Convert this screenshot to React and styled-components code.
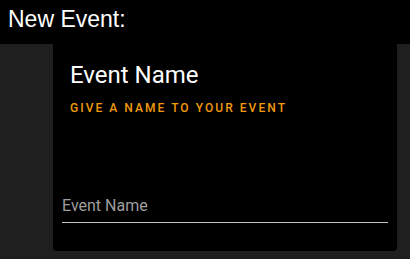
import React from 'react';
import styled, { createGlobalStyle } from 'styled-components';

const GlobalStyle = createGlobalStyle`
  html, body {
    margin: 0;
    padding: 0;
    background: #1f1f1f;
  }
  body {
    font-family: Roboto, "Liberation Sans", sans-serif;
  }
`;

const Page = styled.div`
  width: 410px;
  height: 259px;
  display: flex;
  flex-direction: column;
  background: #1f1f1f;
  overflow: hidden;
`;

const Header = styled.header`
  height: 44px;
  background: #000;
  display: flex;
  align-items: flex-start;
  padding-left: 8px;
  box-sizing: border-box;
`;

const Heading = styled.h1`
  margin: 5px 0 0;
  font-family: "Liberation Sans", Arial, sans-serif;
  font-weight: 400;
  font-size: 23px;
  line-height: 28px;
  color: #fff;
`;

const Main = styled.main`
  flex: 1;
  display: flex;
  padding-left: 53px;
`;

const Card = styled.section`
  width: 344px;
  height: 207px;
  background: #000;
  border-radius: 0 0 4px 4px;
  display: flex;
  flex-direction: column;
  box-sizing: border-box;
  padding: 0 9px;
`;

const CardHead = styled.div`
  padding: 15px 8px 0;
  display: flex;
  flex-direction: column;
`;

const Title = styled.h2`
  margin: 0;
  font-weight: 400;
  font-size: 24px;
  line-height: 32px;
  color: #fff;
`;

const Subtitle = styled.p`
  margin: 9px 0 0;
  font-weight: 500;
  font-size: 12px;
  line-height: 16px;
  letter-spacing: 2.05px;
  text-transform: uppercase;
  color: #f29a0e;
`;

const Field = styled.label`
  margin-top: auto;
  margin-bottom: 28px;
  display: flex;
  flex-direction: column;
  border-bottom: 1px solid #c4c4c4;
  padding-bottom: 6px;
`;

const FieldLabel = styled.span`
  font-size: 16px;
  line-height: 20px;
  color: #9e9e9e;
`;

export default function App() {
  return (
    <Page>
      <GlobalStyle />
      <Header>
        <Heading>New Event:</Heading>
      </Header>
      <Main>
        <Card>
          <CardHead>
            <Title>Event Name</Title>
            <Subtitle>Give a name to your event</Subtitle>
          </CardHead>
          <Field>
            <FieldLabel>Event Name</FieldLabel>
          </Field>
        </Card>
      </Main>
    </Page>
  );
}
